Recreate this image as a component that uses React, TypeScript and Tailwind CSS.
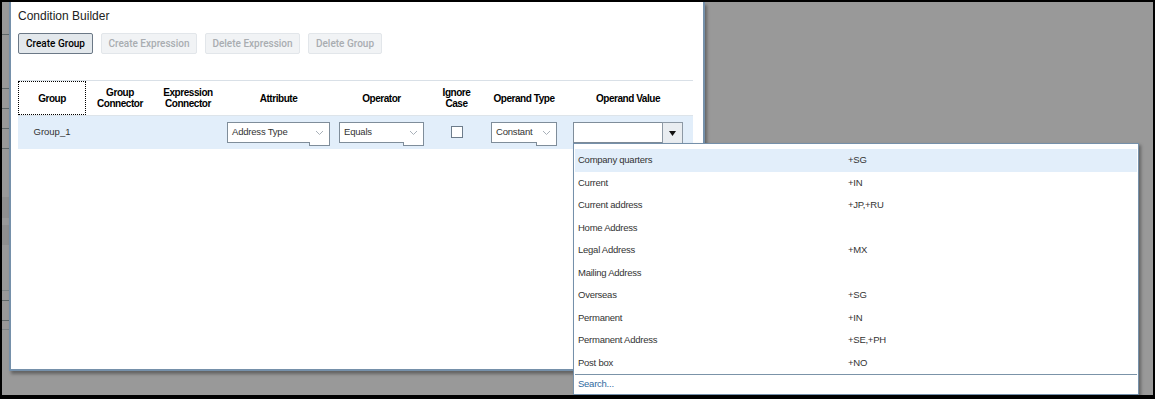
import { ReactNode } from 'react';

const options: [string, string][] = [
  ['Company quarters', '+SG'],
  ['Current', '+IN'],
  ['Current address', '+JP,+RU'],
  ['Home Address', ''],
  ['Legal Address', '+MX'],
  ['Mailing Address', ''],
  ['Overseas', '+SG'],
  ['Permanent', '+IN'],
  ['Permanent Address', '+SE,+PH'],
  ['Post box', '+NO'],
];

function Chevron() {
  return (
    <svg width="9" height="6" viewBox="0 0 9 6">
      <polyline points="1,1 4.5,4.5 8,1" fill="none" stroke="#a9b1b9" strokeWidth="1" />
    </svg>
  );
}

function FakeSelect({ label, width }: { label: string; width: string }) {
  return (
    <div className={`flex items-start ${width}`}>
      <div className="relative z-10 flex h-[21px] flex-1 items-center border-y border-l border-[#7f8d9a] bg-white pl-[4px] -mr-px text-[9.5px] tracking-[-0.2px] text-[#333]">
        {label}
      </div>
      <div className="flex h-[24px] w-[21px] items-start justify-center border border-[#7f8d9a] bg-white pt-[7px]">
        <Chevron />
      </div>
    </div>
  );
}

function HeaderCell({ children, className = '' }: { children: ReactNode; className?: string }) {
  return (
    <div className={`flex items-center justify-center text-center text-[10px] font-bold leading-[11px] tracking-[-0.45px] text-black ${className}`}>
      {children}
    </div>
  );
}

export default function App() {
  return (
    <div className="h-[399px] w-[1155px] bg-black p-[2px] pb-[4px] font-['Liberation_Sans',Arial,sans-serif]">
      <div className="relative flex h-full bg-[#999999] overflow-hidden">
        {/* page behind the dialog */}
        <div className="flex w-[7px] flex-col">
          <div className="h-[32px]" />
          <div className="h-px bg-[#5f6768]" />
          <div className="h-[53px]" />
          <div className="h-px bg-[#5f6768]" />
          <div className="h-[19px]" />
          <div className="h-px bg-[#5f6768]" />
          <div className="h-[19px]" />
          <div className="h-px bg-[#5f6768]" />
          <div className="h-[19px]" />
          <div className="h-px bg-[#5f6768]" />
          <div className="h-[48px]" />
          <div className="h-[21px] bg-[#8f8f8f]" />
          <div className="h-[7px]" />
          <div className="h-[20px] bg-[#8f8f8f]" />
          <div className="h-[45px]" />
          <div className="h-px bg-[#7f8586]" />
          <div className="h-[9px]" />
          <div className="h-px bg-[#5f6768]" />
          <div className="h-[19px]" />
          <div className="h-px bg-[#5f6768]" />
          <div className="h-[8px]" />
          <div className="h-px bg-[#7f8586]" />
        </div>

        {/* dialog */}
        <div className="h-[369px] w-[696px] border-2 border-t-0 border-[#7590aa] bg-white shadow-[2px_3px_3px_rgba(0,0,0,0.35)]">
          <div className="px-[7px] pt-[7px]">
            <div className="text-[12px] leading-[14px] text-[#222]">Condition Builder</div>

            <div className="mt-[10px] flex gap-[8px] font-['Roboto',Arial,sans-serif] font-medium">
              <button className="h-[21px] w-[75px] rounded-[2px] border border-[#6b7886] bg-[#e3e8ec] text-[10px] text-black">
                Create Group
              </button>
              <button className="h-[21px] w-[96px] rounded-[2px] border border-[#e2e6ea] bg-[#f1f3f5] text-[10px] text-[#a9adb1]">
                Create Expression
              </button>
              <button className="h-[21px] w-[95px] rounded-[2px] border border-[#e2e6ea] bg-[#f1f3f5] text-[10px] text-[#a9adb1]">
                Delete Expression
              </button>
              <button className="h-[21px] w-[74px] rounded-[2px] border border-[#e2e6ea] bg-[#f1f3f5] text-[10px] text-[#a9adb1]">
                Delete Group
              </button>
            </div>

            {/* table */}
            <div className="mt-[26px] w-[675px] border-t border-[#d9e0e7]">
              <div className="grid h-[35px] grid-cols-[68px_68px_68px_113px_93px_57px_78px_130px] border-b border-[#dde4ea]">
                <HeaderCell className="border border-dotted border-black">Group</HeaderCell>
                <HeaderCell>
                  Group
                  <br />
                  Connector
                </HeaderCell>
                <HeaderCell>
                  Expression
                  <br />
                  Connector
                </HeaderCell>
                <HeaderCell>Attribute</HeaderCell>
                <HeaderCell>Operator</HeaderCell>
                <HeaderCell>
                  Ignore
                  <br />
                  Case
                </HeaderCell>
                <HeaderCell>Operand Type</HeaderCell>
                <HeaderCell>Operand Value</HeaderCell>
              </div>

              <div className="grid h-[33px] grid-cols-[68px_68px_68px_113px_93px_57px_78px_130px] items-start bg-[#e2eefa]">
                <div className="flex h-full items-center justify-center text-[9.5px] text-[#333]">Group_1</div>
                <div />
                <div />
                <div className="pl-[5px] pt-[6px]">
                  <FakeSelect label="Address Type" width="w-[103px]" />
                </div>
                <div className="pl-[4px] pt-[6px]">
                  <FakeSelect label="Equals" width="w-[85px]" />
                </div>
                <div className="flex justify-center pt-[10px] pl-px">
                  <div className="h-[12px] w-[12px] border border-[#6d7c8b] bg-white" />
                </div>
                <div className="pl-[6px] pt-[6px]">
                  <FakeSelect label="Constant" width="w-[66px]" />
                </div>
                <div className="flex pl-[10px] pt-[6px]">
                  <div className="h-[21px] w-[90px] border border-[#7f8d9a] bg-white" />
                  <div className="-ml-px flex h-[22px] w-[21px] items-center justify-center border border-[#8d99a5] bg-[#e9edf1]">
                    <svg width="7" height="5" viewBox="0 0 7 5">
                      <polygon points="0,0 7,0 3.5,5" fill="#111" />
                    </svg>
                  </div>
                </div>
              </div>
            </div>
          </div>
        </div>

        {/* operand value list */}
        <div className="absolute left-[571px] top-[141px] flex h-[252px] w-[566px] flex-col border border-[#7590aa] bg-white px-px pt-[5px] shadow-[2px_2px_3px_rgba(0,0,0,0.35)]">
          {options.map(([name, code], i) => (
            <div
              key={name}
              className={`flex h-[22.5px] items-center pl-[3px] text-[9.5px] tracking-[-0.25px] text-[#333] ${i === 0 ? 'bg-[#e2eefa]' : ''}`}
            >
              <span className="w-[270px]">{name}</span>
              <span>{code}</span>
            </div>
          ))}
          <div className="flex h-[19px] items-center border-t border-[#7b93a8] pl-[3px] text-[9.5px] tracking-[-0.25px] text-[#2f6aa0]">
            Search...
          </div>
        </div>
      </div>
    </div>
  );
}
